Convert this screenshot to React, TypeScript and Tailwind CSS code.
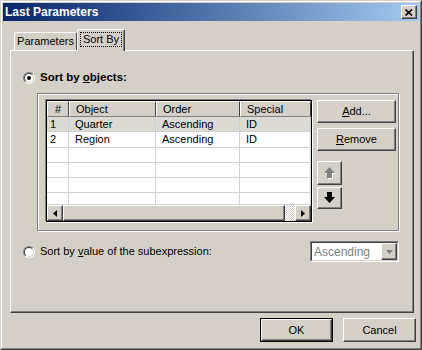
import React from 'react'

const font = { fontFamily: '"Liberation Sans", Arial, sans-serif' }

// raised 3D button edge, windows classic
const raised =
  'border border-t-white border-l-white border-r-[#404040] border-b-[#404040] shadow-[inset_-1px_-1px_0_#808080]'

const Radio = ({ checked }: { checked?: boolean }) => (
  <div className="w-[12px] h-[12px] rounded-full border border-t-[#808080] border-l-[#808080] border-r-white border-b-white">
    <div className="w-full h-full rounded-full border border-t-[#404040] border-l-[#404040] border-r-[#d4d0c8] border-b-[#d4d0c8] bg-white flex items-center justify-center">
      {checked && <div className="w-[4px] h-[4px] rounded-full bg-black" />}
    </div>
  </div>
)

const Arrow = ({ up, disabled }: { up?: boolean; disabled?: boolean }) => {
  const pts = up ? '5.5,0 11,6 8,6 8,11 3,11 3,6 0,6' : '3,0 8,0 8,5 11,5 5.5,11 0,5 3,5'
  return (
    <svg width="12" height="12" viewBox="0 0 12 12">
      {disabled && <polygon points={pts} fill="#fff" transform="translate(1 1)" />}
      <polygon points={pts} fill={disabled ? '#808080' : '#000'} />
    </svg>
  )
}

const cols = [
  { w: 'w-[22px]', label: '#' },
  { w: 'w-[87px]', label: 'Object' },
  { w: 'w-[84px]', label: 'Order' },
  { w: 'w-[71px]', label: 'Special' },
]

const rows = [
  ['1', 'Quarter', 'Ascending', 'ID'],
  ['2', 'Region', 'Ascending', 'ID'],
  ['', '', '', ''],
  ['', '', '', ''],
  ['', '', '', ''],
  ['', '', '', ''],
]
const rowH = ['h-[15px]', 'h-[16px]', 'h-[15px]', 'h-[15px]', 'h-[15px]', 'h-[12px]']

const Grid = () => (
  <div className="w-[266px] h-[122px] border border-black shadow-[-1px_-1px_0_#808080,1px_1px_0_#fff] bg-white flex flex-col overflow-hidden">
    <div className="flex h-[16px] shrink-0">
      {cols.map((c, i) => (
        <div
          key={i}
          className={`${c.w} h-full bg-[#d4d0c8] border-t border-l border-t-white border-l-white border-r border-b border-r-[#404040] border-b-[#808080] flex items-center ${i === 0 ? 'justify-center' : 'pl-[6px]'}`}
        >
          {c.label}
        </div>
      ))}
    </div>
    {rows.map((r, ri) => (
      <div key={ri} className={`flex ${rowH[ri]} shrink-0 border-b border-[#d0d0d0] ${ri === 0 ? 'bg-[#dcdad4]' : ''}`}>
        {r.map((cell, ci) => (
          <div key={ci} className={`${cols[ci].w} h-full border-r border-[#d0d0d0] flex items-center ${ci === 0 ? 'pl-[3px]' : 'pl-[6px]'} leading-none`}>
            {cell}
          </div>
        ))}
      </div>
    ))}
    <div className="flex h-[16px] shrink-0 mt-auto">
      <div className={`w-[16px] h-full bg-[#d4d0c8] ${raised} flex items-center justify-center`}>
        <svg width="4" height="7" viewBox="0 0 4 7"><polygon points="4,0 4,7 0,3.5" fill="#000" /></svg>
      </div>
      <div className={`w-[222px] h-full bg-[#d4d0c8] ${raised}`} />
      <div className="w-[10px] h-full bg-[repeating-conic-gradient(#fff_0_25%,#d4d0c8_0_50%)] bg-[length:2px_2px]" />
      <div className={`flex-1 h-full bg-[#d4d0c8] ${raised} flex items-center justify-center`}>
        <svg width="4" height="7" viewBox="0 0 4 7"><polygon points="0,0 0,7 4,3.5" fill="#000" /></svg>
      </div>
    </div>
  </div>
)

const Btn = ({ children, cls = '' }: { children: React.ReactNode; cls?: string }) => (
  <div className={`bg-[#d4d0c8] ${raised} flex items-center justify-center ${cls}`}>{children}</div>
)

export default function App() {
  return (
    <div className="w-[422px] h-[350px] bg-[#d4d0c8] text-[11px] text-black border border-t-[#d4d0c8] border-l-[#d4d0c8] border-r-[#404040] border-b-[#404040]" style={font}>
      <div className="w-full h-full border border-t-white border-l-white border-r-[#808080] border-b-[#808080] p-px flex flex-col">
        {/* title bar */}
        <div className="h-[18px] shrink-0 bg-gradient-to-r from-[#0a246a] to-[#a6caf0] flex items-center pl-[2px] pr-[2px]">
          <span className="text-white font-bold text-[12px] flex-1">Last Parameters</span>
          <Btn cls="w-[16px] h-[14px]">
            <svg width="8" height="7" viewBox="0 0 8 7">
              <path d="M0.5 0.5 L7 6.5 M7 0.5 L0.5 6.5" stroke="#000" strokeWidth="1.6" />
            </svg>
          </Btn>
        </div>

        {/* tabs */}
        <div className="mt-[8px] h-[21px] shrink-0 flex items-end pl-[11px]">
          <div className="w-[63px] h-[18px] border-t border-l border-t-white border-l-white border-r border-r-[#404040] rounded-t-[2px] flex items-center justify-center">
            Parameters
          </div>
          <div className="relative z-10 -mb-px w-[48px] h-[22px] bg-[#d4d0c8] border-t border-l border-t-white border-l-white border-r border-r-[#404040] shadow-[inset_-1px_0_0_#808080] rounded-t-[2px] flex items-start justify-center pt-[2px]">
            <span className="border border-dotted border-black px-[2px] leading-[13px]">Sort By</span>
          </div>
        </div>

        {/* panel */}
        <div className="ml-[7px] w-[404px] h-[263px] shrink-0 border border-t-white border-l-white border-r-[#404040] border-b-[#404040] shadow-[inset_-1px_-1px_0_#808080] flex flex-col">
          <div className="mt-[20px] h-[13px] pl-[12px] flex items-center">
            <Radio checked />
            <span className="ml-[5px] font-bold text-[11.5px]">
              Sort by <u>o</u>bjects:
            </span>
          </div>

          <div className="mt-[9px] ml-[26px] w-[362px] h-[138px] border border-[#808080] shadow-[1px_1px_0_#fff,inset_1px_1px_0_#fff] pt-[6px] pl-[8px] flex">
            <Grid />
            <div className="ml-[5px] flex flex-col">
              <Btn cls="w-[79px] h-[23px]">
                <span><u>A</u>dd...</span>
              </Btn>
              <Btn cls="mt-[5px] w-[79px] h-[23px]">
                <span><u>R</u>emove</span>
              </Btn>
              <Btn cls="mt-[10px] w-[25px] h-[24px]">
                <Arrow up disabled />
              </Btn>
              <Btn cls="mt-[2px] w-[25px] h-[22px]">
                <Arrow />
              </Btn>
            </div>
          </div>

          <div className="mt-[10px] h-[21px] pl-[12px] flex items-center">
            <Radio />
            <span className="ml-[5px] flex-1">
              Sort by <u>v</u>alue of the subexpression:
            </span>
            <div className="mr-[14px] w-[89px] h-[21px] border border-t-[#808080] border-l-[#808080] border-r-white border-b-white">
              <div className="w-full h-full border border-t-[#404040] border-l-[#404040] border-r-[#d4d0c8] border-b-[#d4d0c8] bg-white flex items-center">
                <span className="flex-1 pl-[2px] text-[#808080] text-[12px]">Ascending</span>
                <Btn cls="w-[16px] h-full">
                  <svg width="7" height="4" viewBox="0 0 7 4"><polygon points="0,0 7,0 3.5,4" fill="#808080" /></svg>
                </Btn>
              </div>
            </div>
          </div>
        </div>

        {/* bottom buttons */}
        <div className="mt-[5px] flex justify-end pr-[3px]">
          <div className="w-[73px] h-[24px] border border-black">
            <Btn cls="w-full h-full">OK</Btn>
          </div>
          <Btn cls="ml-[10px] w-[73px] h-[24px]">Cancel</Btn>
        </div>
      </div>
    </div>
  )
}
